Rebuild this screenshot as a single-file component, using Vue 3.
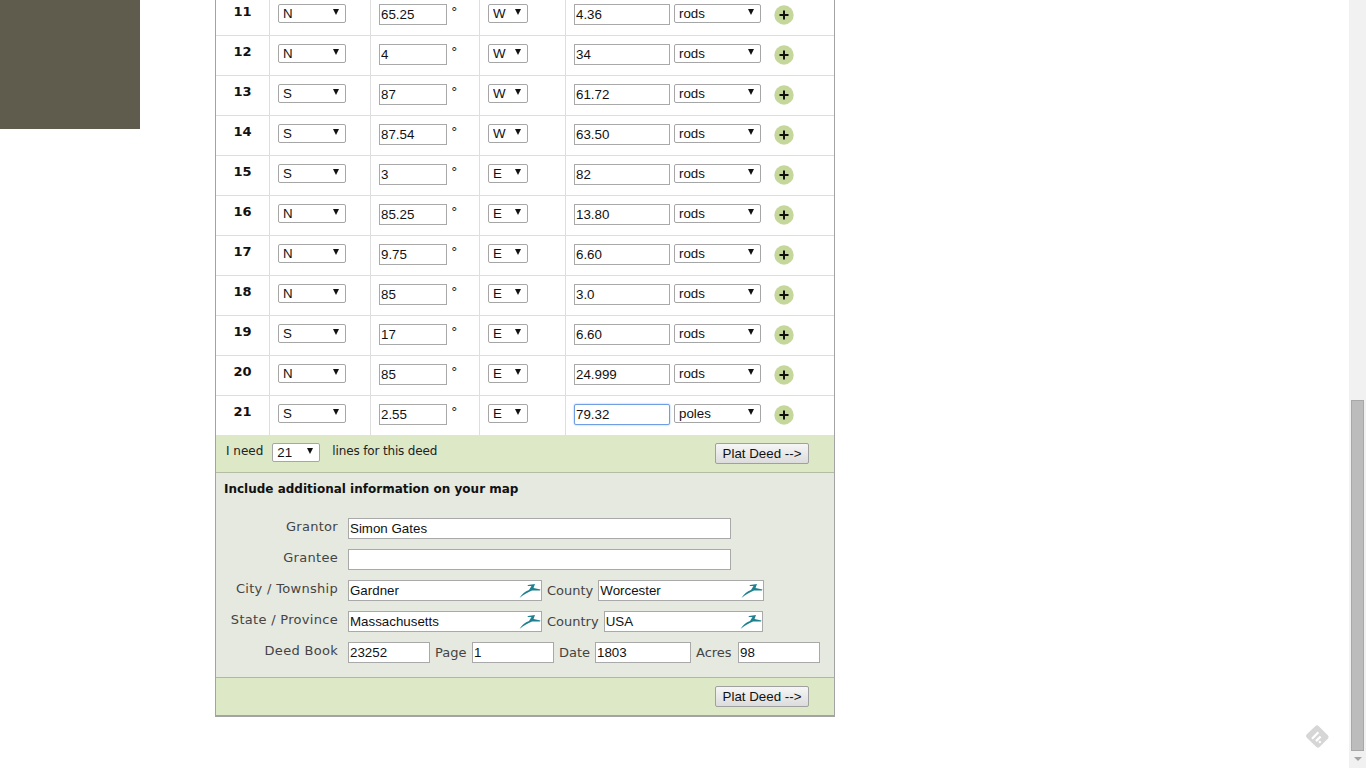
<template>
  <div class="page">
    <div class="view">
      <div class="side-block"></div>
      <div class="deed-box">
        <div v-for="row in rows" :key="row.num" class="line">
          <div class="cell num">{{ row.num }}</div>
          <div class="cell">
            <span class="sel w68"><select><option>{{ row.ns }}</option></select></span>
          </div>
          <div class="cell">
            <input class="txt w68i" type="text" :value="row.deg">
            <span class="deg">°</span>
          </div>
          <div class="cell">
            <span class="sel w40"><select><option>{{ row.ew }}</option></select></span>
          </div>
          <div class="cell last">
            <input class="txt w96" :class="{ focused: row.focus }" type="text" :value="row.dist">
            <span class="sel w87"><select><option>{{ row.unit }}</option></select></span>
            <svg class="plus" width="20" height="20" viewBox="0 0 20 20">
              <circle cx="10" cy="10" r="9.7" fill="#c5d79b" />
              <path d="M10 5.5v9M5.5 10h9" stroke="#111" stroke-width="2" />
            </svg>
          </div>
        </div>

        <div class="bar top-bar">
          <span class="need">I need</span>
          <span class="sel w48"><select><option>21</option></select></span>
          <span class="need lines">lines for this deed</span>
          <button class="plat" type="button">Plat Deed --&gt;</button>
        </div>

        <div class="extra">
          <div class="extra-title">Include additional information on your map</div>
          <div class="form-row">
            <label class="lab">Grantor</label>
            <input class="txt wide" type="text" value="Simon Gates">
          </div>
          <div class="form-row">
            <label class="lab">Grantee</label>
            <input class="txt wide" type="text" value="">
          </div>
          <div class="form-row">
            <label class="lab">City / Township</label>
            <span class="geo w194">
              <input class="txt" type="text" value="Gardner">
              <svg class="deer" width="22" height="16" viewBox="0 0 22 16"><path :d="deerPath" /></svg>
            </span>
            <label class="inline-lab">County</label>
            <span class="geo w166">
              <input class="txt" type="text" value="Worcester">
              <svg class="deer" width="22" height="16" viewBox="0 0 22 16"><path :d="deerPath" /></svg>
            </span>
          </div>
          <div class="form-row">
            <label class="lab">State / Province</label>
            <span class="geo w194">
              <input class="txt" type="text" value="Massachusetts">
              <svg class="deer" width="22" height="16" viewBox="0 0 22 16"><path :d="deerPath" /></svg>
            </span>
            <label class="inline-lab">Country</label>
            <span class="geo w159">
              <input class="txt" type="text" value="USA">
              <svg class="deer" width="22" height="16" viewBox="0 0 22 16"><path :d="deerPath" /></svg>
            </span>
          </div>
          <div class="form-row">
            <label class="lab">Deed Book</label>
            <input class="txt w82" type="text" value="23252">
            <label class="inline-lab page-lab">Page</label>
            <input class="txt w82" type="text" value="1">
            <label class="inline-lab date-lab">Date</label>
            <input class="txt w96" type="text" value="1803">
            <label class="inline-lab acres-lab">Acres</label>
            <input class="txt w82" type="text" value="98">
          </div>
        </div>

        <div class="bar bottom-bar">
          <button class="plat" type="button">Plat Deed --&gt;</button>
        </div>
      </div>

      <!-- floating feedly badge -->
      <svg class="badge" width="26" height="26" viewBox="0 0 26 26">
        <path d="M11.2 2.2a2.5 2.5 0 0 1 3.6 0l9 9a2.5 2.5 0 0 1 0 3.6l-8.2 8.2a2.5 2.5 0 0 1-3.2 0l-9.6-9.2a2.5 2.5 0 0 1 0-3.6z" fill="#d6d6d6" />
        <path d="M13.6 7.5 7.2 13.9l1.6 1.6 6.4-6.4zM15.8 11.7l-4.6 4.6 1.6 1.6 4.6-4.6zM14.4 18.1l1.5 1.5 1.5-1.5-1.5-1.5z" fill="#fff" />
      </svg>
    </div>

    <div class="scroll-track">
      <div class="scroll-thumb"></div>
      <div class="scroll-arrow"></div>
    </div>
  </div>
</template>

<script setup>
const deerPath = 'M0.5 15C3 11 6 8.5 10 7L12.5 3 8.5 3 9 2 16 1 14.5 5 21.5 6.5 21 7.5 13 7.5C9 9 4 12 0.5 15Z'

const rows = [
  { num: 11, ns: 'N', deg: '65.25', ew: 'W', dist: '4.36', unit: 'rods' },
  { num: 12, ns: 'N', deg: '4', ew: 'W', dist: '34', unit: 'rods' },
  { num: 13, ns: 'S', deg: '87', ew: 'W', dist: '61.72', unit: 'rods' },
  { num: 14, ns: 'S', deg: '87.54', ew: 'W', dist: '63.50', unit: 'rods' },
  { num: 15, ns: 'S', deg: '3', ew: 'E', dist: '82', unit: 'rods' },
  { num: 16, ns: 'N', deg: '85.25', ew: 'E', dist: '13.80', unit: 'rods' },
  { num: 17, ns: 'N', deg: '9.75', ew: 'E', dist: '6.60', unit: 'rods' },
  { num: 18, ns: 'N', deg: '85', ew: 'E', dist: '3.0', unit: 'rods' },
  { num: 19, ns: 'S', deg: '17', ew: 'E', dist: '6.60', unit: 'rods' },
  { num: 20, ns: 'N', deg: '85', ew: 'E', dist: '24.999', unit: 'rods' },
  { num: 21, ns: 'S', deg: '2.55', ew: 'E', dist: '79.32', unit: 'poles', focus: true }
]
</script>

<style scoped>
.page {
  display: flex;
  height: 768px;
  overflow: hidden;
  background: #fff;
  font-family: "DejaVu Sans", Verdana, sans-serif;
  font-size: 13px;
}

.view {
  flex: 1;
  display: flex;
  align-items: flex-start;
  position: relative;
}

.side-block {
  width: 140px;
  height: 129px;
  flex: none;
  background: #5f5b4d;
}

/* page is scrolled, first rows sit above the fold */
.deed-box {
  width: 620px;
  margin-top: -4px;
  margin-left: 75px;
  box-sizing: border-box;
  border-left: 1px solid #a3a3a3;
  border-right: 1px solid #a3a3a3;
  border-bottom: 2px solid #a3a3a3;
}

.line {
  display: grid;
  grid-template-columns: 54px 101px 109px 86px 268px;
  height: 40px;
  box-sizing: border-box;
  border-bottom: 1px solid #dedede;
}

.line:nth-last-child(4) {
  height: 39px;
  border-bottom: 0;
}

.cell {
  display: flex;
  align-items: flex-start;
  box-sizing: border-box;
  padding: 8px 0 0 8px;
  border-right: 1px solid #dedede;
}

.cell.last {
  border-right: 0;
}

.num {
  display: block;
  padding: 8px 0 0;
  text-align: center;
  font-weight: bold;
  font-size: 13px;
  line-height: 16px;
  color: #111;
}

.deg {
  margin-left: 4px;
  line-height: 16px;
  color: #222;
}

.txt {
  height: 21px;
  box-sizing: border-box;
  border: 1px solid #a9a9a9;
  padding: 1px;
  margin: 0;
  background: #fff;
  color: #111;
  font-family: "Liberation Sans", Arial, sans-serif;
  font-size: 13.33px;
  outline: none;
}

.txt.focused {
  border-color: #6f9fe2;
  border-radius: 2px;
  box-shadow: 0 0 2px #8fb6ee;
}

.w68i { width: 68px; }
.w96 { width: 96px; flex: none; }
.w82 { width: 82px; flex: none; }
.wide { width: 383px; }

.sel {
  display: inline-block;
  position: relative;
  height: 19px;
  flex: none;
}

.sel select {
  appearance: none;
  display: block;
  width: 100%;
  height: 19px;
  box-sizing: border-box;
  margin: 0;
  padding: 0 0 0 4px;
  border: 1px solid #a6a6a6;
  border-radius: 2px;
  background: #fff;
  color: #111;
  font-family: "Liberation Sans", Arial, sans-serif;
  font-size: 13.33px;
}

.sel::after {
  content: "";
  position: absolute;
  right: 7px;
  top: 5px;
  border-left: 3px solid transparent;
  border-right: 3px solid transparent;
  border-top: 6px solid #111;
  pointer-events: none;
}

.w68 { width: 68px; }
.w40 { width: 40px; }
.w87 { width: 87px; margin-left: 4px; }
.w48 { width: 48px; margin-left: 2px; }

.plus {
  margin: 1px 0 0 13px;
  flex: none;
}

.bar {
  display: flex;
  align-items: flex-start;
  background: #dde8c7;
  box-sizing: border-box;
}

.top-bar {
  height: 38px;
  padding: 8px 25px 0 10px;
  border-bottom: 1px solid #b4bda4;
}

.need {
  color: #222;
  font-size: 12px;
  line-height: 16px;
  margin-right: 7px;
}

.lines {
  margin-left: 12px;
  margin-right: auto;
  letter-spacing: -0.15px;
}

.plat {
  width: 94px;
  height: 21px;
  margin: 0;
  padding: 0;
  border: 1px solid #a0a0a0;
  border-radius: 2px;
  background: linear-gradient(#f6f6f6, #dcdcdc);
  color: #111;
  font-family: "Liberation Sans", Arial, sans-serif;
  font-size: 13.33px;
}

.extra {
  height: 205px;
  box-sizing: border-box;
  padding: 9px 8px 0;
  background: #e6e9e0;
  border-bottom: 1px solid #b2b5ab;
}

.extra-title {
  font-weight: bold;
  font-size: 12px;
  line-height: 15px;
  color: #111;
  margin-bottom: 21px;
}

.form-row {
  display: flex;
  align-items: flex-start;
  height: 21px;
  margin-bottom: 10px;
}

.lab {
  width: 114px;
  margin: 1px 10px 0 0;
  flex: none;
  text-align: right;
  color: #444;
  letter-spacing: 0.3px;
  line-height: 16px;
}

.inline-lab {
  margin: 3px 5px 0;
  line-height: 16px;
  color: #444;
  flex: none;
}

.page-lab { width: 32px; }
.date-lab { width: 31px; }
.acres-lab { width: 37px; }

.geo {
  display: block;
  position: relative;
  flex: none;
}

.geo .txt {
  display: block;
  width: 100%;
}

.w194 { width: 194px; }
.w166 { width: 166px; }
.w159 { width: 159px; }

.deer {
  position: absolute;
  right: 1px;
  top: 3px;
  fill: #1f8090;
}

.bottom-bar {
  height: 37px;
  justify-content: flex-end;
  padding: 8px 25px 0 0;
}

.badge {
  position: absolute;
  right: 19px;
  bottom: 18px;
}

.scroll-track {
  width: 17px;
  flex: none;
  box-sizing: border-box;
  background: #f1f1f1;
  padding: 400px 2px 0;
}

.scroll-thumb {
  height: 351px;
  box-sizing: border-box;
  background: #bcbcbc;
  border: 1px solid #a8a8a8;
}

.scroll-arrow {
  width: 0;
  margin: 6px auto 0;
  border-left: 4px solid transparent;
  border-right: 4px solid transparent;
  border-top: 4px solid #a3a3a3;
}
</style>

<style>
html, body {
  margin: 0;
  overflow: hidden;
}
</style>
